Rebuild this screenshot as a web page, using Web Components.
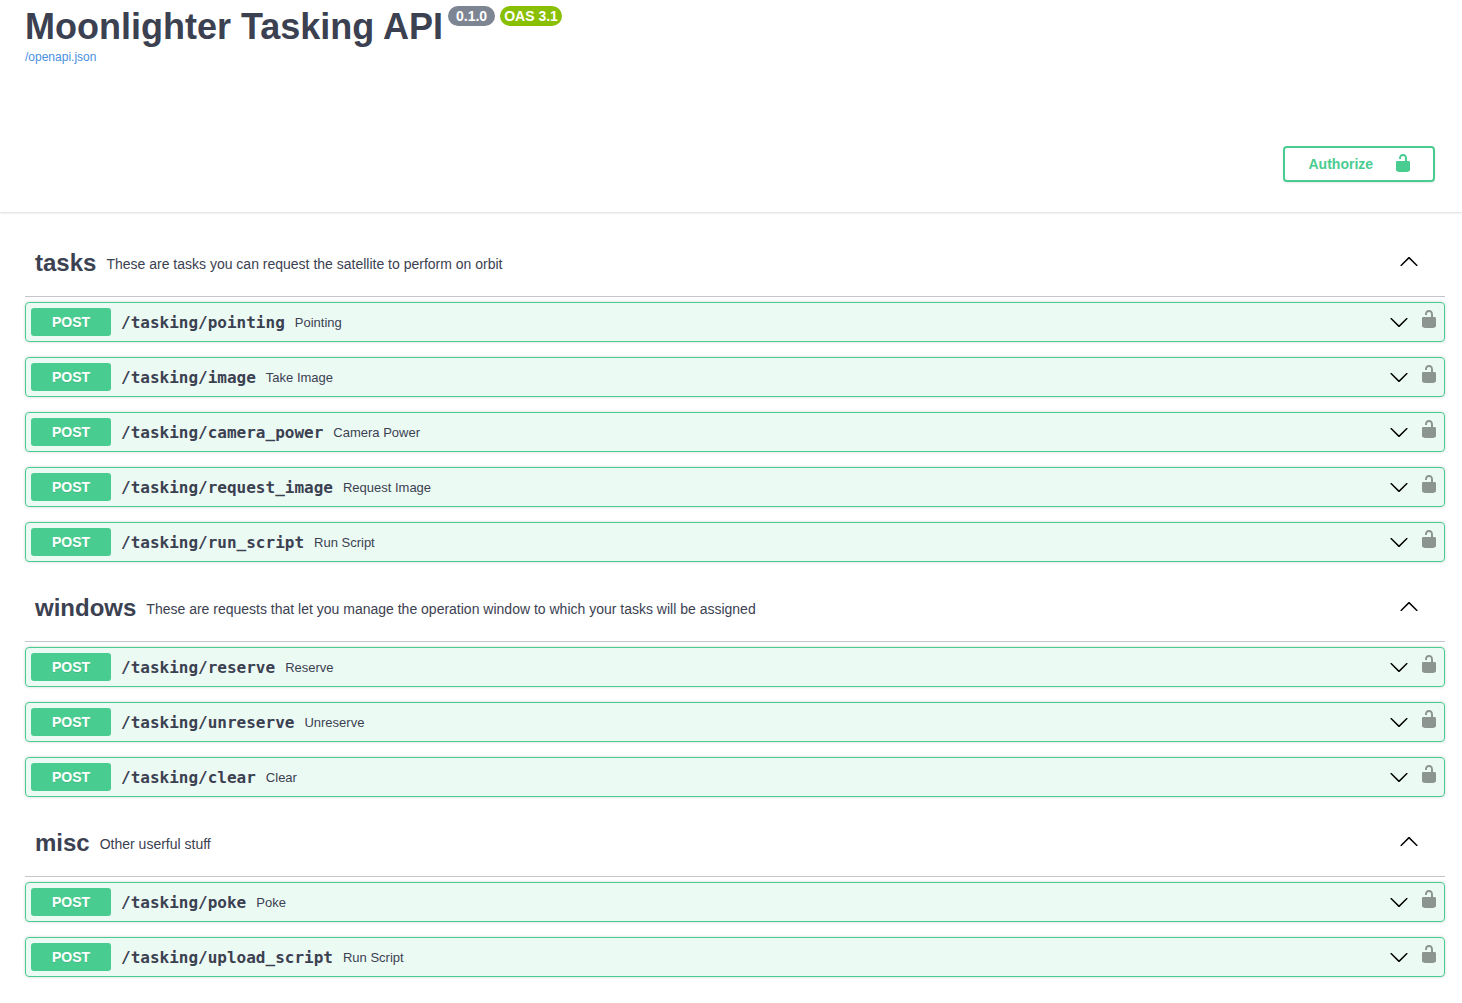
<!DOCTYPE html>
<html lang="en">
<head>
<meta charset="utf-8">
<title>Moonlighter Tasking API</title>
<style>
body{margin:0;background:#fff;color:#3b4151;font-family:"Liberation Sans",Arial,sans-serif;overflow:hidden}
</style>
</head>
<body>
<api-page>
  <api-info slot="info" heading="Moonlighter Tasking API" version="0.1.0" oas="OAS 3.1" url="/openapi.json"></api-info>
  <auth-bar slot="auth">Authorize</auth-bar>
  <tag-section name="tasks" description="These are tasks you can request the satellite to perform on orbit">
    <op-block path="/tasking/pointing">Pointing</op-block>
    <op-block path="/tasking/image">Take Image</op-block>
    <op-block path="/tasking/camera_power">Camera Power</op-block>
    <op-block path="/tasking/request_image">Request Image</op-block>
    <op-block path="/tasking/run_script">Run Script</op-block>
  </tag-section>
  <tag-section name="windows" description="These are requests that let you manage the operation window to which your tasks will be assigned">
    <op-block path="/tasking/reserve">Reserve</op-block>
    <op-block path="/tasking/unreserve">Unreserve</op-block>
    <op-block path="/tasking/clear">Clear</op-block>
  </tag-section>
  <tag-section name="misc" description="Other userful stuff">
    <op-block path="/tasking/poke">Poke</op-block>
    <op-block path="/tasking/upload_script">Run Script</op-block>
  </tag-section>
</api-page>
<script>
const define = (tag, render) => customElements.define(tag, class extends HTMLElement {
  connectedCallback() {
    if (this.shadowRoot) return;
    this.attachShadow({mode: 'open'}).innerHTML = render(this);
  }
});

define('lock-icon', () => `
<style>:host{display:block;width:20px;height:20px}svg{display:block}</style>
<svg width="20" height="20" viewBox="0 0 20 20" fill="currentColor"><path d="M15.8 8H14V5.6C14 2.703 12.665 1 10 1 7.334 1 6 2.703 6 5.6V6h2v-.801C8 3.754 8.797 3 10 3c1.203 0 2 .754 2 2.199V8H4c-.553 0-1 .646-1 1.199V17c0 .549.428 1.139.951 1.307l1.197.387C5.672 18.861 6.55 19 7.1 19h5.8c.549 0 1.428-.139 1.951-.307l1.196-.387c.524-.167.953-.757.953-1.306V9.199C17 8.646 16.352 8 15.8 8z"/></svg>`);

define('chevron-icon', el => `
<style>:host{display:block;width:20px;height:20px;color:#000}svg{display:block}</style>
<svg width="20" height="20" viewBox="0 0 20 20" fill="currentColor"><path d="${el.hasAttribute('up')
  ? 'M17.418 14.908c.272.268.709.268.979 0s.271-.701 0-.969l-7.908-7.83c-.27-.268-.707-.268-.979 0l-7.908 7.83c-.27.268-.27.701 0 .969s.709.268.979 0L10 7.767z'
  : 'M17.418 6.109c.272-.268.709-.268.979 0s.271.701 0 .969l-7.908 7.83c-.27.268-.707.268-.979 0l-7.908-7.83c-.27-.268-.27-.701 0-.969s.709-.268.979 0L10 13.25z'}"/></svg>`);

define('version-pill', () => `
<style>:host{display:block;background:#7d8492;color:#fff;border-radius:57px;font:bold 14px/16px "Liberation Sans",sans-serif;padding:2px 8px;white-space:nowrap}
:host([oas]){background:#89bf04;padding:2px 4px}</style><slot></slot>`);

define('api-info', el => `
<style>
:host{display:block;height:110px;padding:6px 25px 0}
.row{display:flex;align-items:flex-start;gap:5px}
h2{margin:0;font-size:36px;line-height:42px;font-weight:bold}
a{display:block;font-size:12px;line-height:14px;margin-top:2px;color:#4990e2}
</style>
<div class="row"><h2>${el.getAttribute('heading')}</h2><version-pill>${el.getAttribute('version')}</version-pill><version-pill oas>${el.getAttribute('oas')}</version-pill></div>
<a>${el.getAttribute('url')}</a>`);

define('auth-bar', () => `
<style>
:host{display:flex;justify-content:flex-end;padding:30px 27px 30px 25px;margin-bottom:20px;background:#fff;box-shadow:0 1px 2px rgba(0,0,0,.15)}
button{display:flex;align-items:center;justify-content:space-between;box-sizing:border-box;width:152px;height:36px;margin:0;padding:0 20px 2px 23.5px;border:2px solid #49cc90;border-radius:4px;background:transparent;color:#49cc90;box-shadow:0 1px 2px rgba(0,0,0,.1);font:bold 14px/16px "Liberation Sans",sans-serif}
span{padding-top:2px}
</style>
<button><span><slot></slot></span><lock-icon></lock-icon></button>`);

define('tag-section', el => `
<style>
:host{display:block}
header{display:flex;align-items:center;box-sizing:border-box;height:65px;padding:0 26px 2px 10px;margin-bottom:5px;border-bottom:1px solid rgba(59,65,81,.3)}
h3{margin:0;font-size:24px;line-height:28px}
small{flex:1;padding:2px 10px 0;font-size:14px;line-height:16px}
chevron-icon{margin-bottom:4px}
</style>
<header><h3>${el.getAttribute('name')}</h3><small>${el.getAttribute('description')}</small><chevron-icon up></chevron-icon></header>
<slot></slot>`);

define('op-block', el => `
<style>
:host{display:flex;align-items:center;box-sizing:border-box;height:40px;margin-bottom:15px;padding:5px;border:1px solid #49cc90;border-radius:4px;background:rgba(73,204,144,.1);box-shadow:0 0 3px rgba(0,0,0,.19)}
b{width:80px;padding:6px 0;border-radius:3px;background:#49cc90;color:#fff;text-align:center;text-shadow:0 1px 0 rgba(0,0,0,.1);font-size:14px;line-height:16px}
code{padding:0 10px;font:600 16px/19px "DejaVu Sans Mono",monospace}
span{flex:1;font-size:13px;line-height:15px}
chevron-icon{margin-right:10px}
lock-icon{color:#000;opacity:.4;margin-bottom:6px}
</style>
<b>POST</b><code>${el.getAttribute('path')}</code><span><slot></slot></span><chevron-icon></chevron-icon><lock-icon></lock-icon>`);

define('api-page', () => `
<style>:host{display:block;height:1003px;overflow:hidden}main{padding:0 17px 0 25px}</style>
<slot name="info"></slot><slot name="auth"></slot><main><slot></slot></main>`);
</script>
</body>
</html>
